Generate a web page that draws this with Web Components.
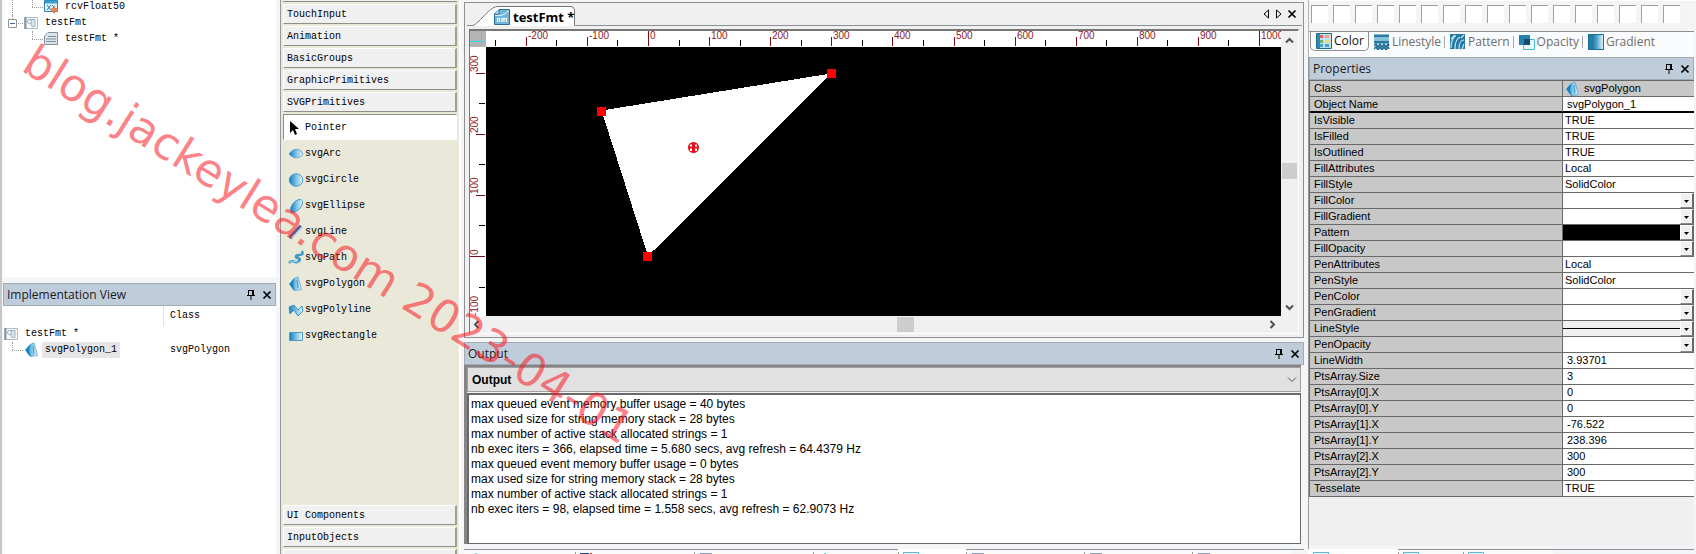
<!DOCTYPE html>
<html lang="en">
<head>
<meta charset="utf-8">
<title>testFmt</title>
<style>
  html, body { margin: 0; height: 100%; }
  body { background: #f4f5f6; overflow: hidden; color: #000;
    --mono: "Liberation Mono", monospace; --ui: "Open Sans", "Noto Sans", sans-serif; --arial: "Liberation Sans", Arial, sans-serif;
    --title: #bfcddb; --line: #8c8f93; }
</style>
</head>
<body>
<studio-app></studio-app>
<script>
const define = (name, html, setup) => customElements.define(name, class extends HTMLElement {
  constructor() {
    super();
    const t = document.createElement('template');
    t.innerHTML = typeof html === 'string' ? html : html(this);
    this.attachShadow({ mode: 'open' }).appendChild(t.content.cloneNode(true));
  }
  connectedCallback() { if (setup && !this.ready) { this.ready = true; setup(this, this.shadowRoot); } }
});

/* ---------- icons ---------- */
const blue = '<defs><linearGradient id="g"><stop offset="0" stop-color="#0e7dbb"/><stop offset=".5" stop-color="#7cc0e4"/><stop offset="1" stop-color="#e6f5fc"/></linearGradient></defs>';
const ICONS = {
  pin: [10, 12, '<path d="M2.5 1v5M6.5 1v5M7.5 1v5M2 1.500h6M1 6.500h8M5 7v4" stroke="#000" fill="none"/>'],
  close: [10, 10, '<path d="M1.500 1.500l7 7M8.500 1.500l-7 7" stroke="#000" stroke-width="1.700" fill="none"/>'],
  left: [7, 10, '<path d="M5.500 1v8L1 5z" stroke="#000" fill="none"/>'],
  right: [7, 10, '<path d="M1.500 1v8L6 5z" stroke="#000" fill="none"/>'],
  up: [9, 7, '<path d="M1 5.500L4.500 2 8 5.500" stroke="#505050" stroke-width="2" fill="none"/>'],
  down: [9, 7, '<path d="M1 1.500L4.500 5 8 1.500" stroke="#505050" stroke-width="2" fill="none"/>'],
  prev: [7, 9, '<path d="M5.500 1L2 4.500 5.500 8" stroke="#505050" stroke-width="2" fill="none"/>'],
  next: [7, 9, '<path d="M1.500 1L5 4.500 1.500 8" stroke="#505050" stroke-width="2" fill="none"/>'],
  thin: [10, 7, '<path d="M1 1.500L5 5.500 9 1.500" stroke="#505050" fill="none"/>'],
  tri: [5, 3, '<path d="M0 0h5L2.500 3z"/>'],
  arrow: [16, 16, '<path d="M2 1v12l3-3 2 5 2-1-2-5h4z"/>'],
  arc: [16, 16, blue + '<path d="M1 8C4 3 10 2 13 5l2 3c-3 5-10 5-14 0z" fill="url(#g)" stroke="#4aa0d0" stroke-width=".8"/>'],
  circle: [16, 16, blue + '<ellipse cx="8" cy="8" rx="6.800" ry="6.300" fill="url(#g)" stroke="#4f9fca"/>'],
  ellipse: [16, 16, blue + '<path d="M3 14C1 10 5 3 11 1.500c4-.5 4 3 3 5.500-2 5-8 9-11 7z" fill="url(#g)" stroke="#4f9fca"/>'],
  line: [16, 16, '<path d="M2 14L13 2" stroke="#3d5f96" stroke-width="3.500"/><path d="M4 14L14 3" stroke="#b9d3ea" stroke-width="1.500"/>'],
  path: [16, 16, '<path d="M1 13c4-4 5 0 8-1s4-3 1-4c-3 0-3-3 1-3s4-1 3-4" stroke="#3b9cc9" stroke-width="2.500" fill="none"/><path d="M2 13c4-3 6 0 8-2" stroke="#bfe4f3" fill="none"/>'],
  polygon: [16, 16, blue + '<path d="M6 2.500L10 1l3.500 12.500L6 14.500 1.500 8z" fill="url(#g)" stroke="#58a9d3" stroke-width=".8"/><path d="M6 2.500L1.500 8 6 14.500 5 8z" fill="#1284bd"/><path d="M9 4l1 8" stroke="#3c9ccc" fill="none"/>'],
  polyline: [16, 16, blue + '<path d="M1 5l5-2 4 5 4-4 1 5-5 5-4-6-4 4z" fill="url(#g)" stroke="#3b96c8"/>'],
  rect: [16, 16, blue + '<path d="M1.500 4.500h13v8h-13z" fill="url(#g)" stroke="#4c9dc9"/>'],
  node: [14, 14, '<path d="M.5 1.500h13v11H.5z" fill="#f6f8f9" stroke="#aebcc5"/><path d="M1.500 1v12" stroke="#8296a3" stroke-width="2"/><path d="M5 3.500h6v7H8z" fill="#d6e4ee" stroke="#9fb6c6"/><circle cx="5.500" cy="5.500" r="2" fill="#fff" stroke="#8fabbd"/>'],
  file: [14, 14, '<path d="M4 .5h9.500v12H.5V4z" fill="#dce5ea" stroke="#7e929e"/><path d="M4 4.500h8M2 7h10M2 9.500h10" stroke="#7e929e"/>'],
  recv: [14, 14, '<path d="M.5.5h13v11H.5z" fill="#e4f3fb" stroke="#2a7cab"/><path d="M1 2h12" stroke="#3b9fd2" stroke-width="3"/><path d="M3 5l4 5m0-5l-4 5m5-5l3 3" stroke="#2478a8"/><path d="M7 9.500l3.500-3v2H14v3h-3.500v2z" fill="#ef8a4a" stroke="#c5622a" stroke-width=".6"/>'],
  doc: [16, 16, '<path d="M5 .5h10.500v15H.5V5z" fill="#71b5da" stroke="#246e9b"/><path d="M1 6.500h5l4-1 5-4" stroke="#d9f1fb" fill="none"/><path d="M5 1v4H1" stroke="#246e9b" fill="#e7f6fd"/><path d="M3.500 13V9.500h2V13M8 13V9.500h2V13m0-3.500h2.500V13" stroke="#fff" fill="none" stroke-width="1.200"/>'],
  color: [16, 16, '<path d="M.5 .5h15v15H.5z" fill="#bde2f0" stroke="#1b6d94"/><path d="M1 1h3v14H1z" fill="#3089b5"/><path d="M4 2h3v3H4z" fill="#ef5a4f"/><path d="M4 7h3v3H4z" fill="#6abb5a"/><path d="M4 11h3v3H4zM9 11h4v3H9z" fill="#4aa3cf"/><path d="M9 2h4v3H9z" fill="#f3a27c"/><path d="M9 7h4v3H9z" fill="#f2dc7c"/>'],
  lines: [16, 16, '<path d="M0 2h15M0 8h15" stroke="#247ba6" stroke-width="3"/><path d="M0 5h15" stroke="#5db0d5" stroke-width="1.500"/><path d="M0 12l2-2 2 3 2-3 2 3 2-3 2 3 2-3 1 2M0 15l2-2 2 3 2-3 2 3 2-3 2 3 2-3 1 2" stroke="#1c6b93" stroke-width="1.500" fill="none"/>'],
  pattern: [16, 16, '<path d="M0 0h15v15H0z" fill="#2478a2"/><path d="M1 14c0-8 3-12 5-12M5 15c0-8 3-11 5-12M9 15c0-7 3-9 5-9M1 5l4-4M11 4l3-3M12 15l2-5" stroke="#c3e6f4" stroke-width="1.200" fill="none"/>'],
  opacity: [16, 16, '<path d="M4.500 5.500h11v10h-11z" fill="#e8f8fc" stroke="#4db8d2"/><path d="M0 1h11v10H0z" fill="#2480ad"/><path d="M5 5h6v6H5z" fill="#124d6d"/>'],
  gradient: [16, 16, '<defs><linearGradient id="h"><stop offset="0" stop-color="#0d5273"/><stop offset=".5" stop-color="#3f9cc8"/><stop offset="1" stop-color="#e8f6fb"/></linearGradient></defs><path d="M.5 .5h15v15H.5z" fill="url(#h)" stroke="#1b6c93"/><path d="M1 1h3v14H1z" fill="#1f7fae"/>'],
  pane: [16, 16, '<path d="M.5 .5h15v15H.5z" fill="#e6f6fb" stroke="#5fb8d8"/><path d="M1 2h4v13H1z" fill="#3fa6cf"/><path d="M6 2v3M10 2l2 3M13 2v3" stroke="#2a86ad"/>'],
  globe: [14, 14, '<circle cx="7" cy="7" r="6" fill="#bfe6f2" stroke="#3fa5c4"/>'],
  calls: [14, 14, '<path d="M0 0h9v10H0z" fill="#2f3f8f"/><path d="M11 0v6" stroke="#c8502a" stroke-width="2"/>'],
  sheet: [14, 14, '<path d="M1 1h12v12H1z" fill="#7d9bd0" stroke="#303c6c"/>'],
  search: [14, 14, '<path d="M7 0l5 4v8H2V4z" fill="#2fa3ac"/>']
};
customElements.define('ui-icon', class extends HTMLElement {
  connectedCallback() {
    if (this.shadowRoot) return;
    const [w, h, body] = ICONS[this.getAttribute('name')];
    this.attachShadow({ mode: 'open' }).innerHTML =
      `<style>:host{display:block;flex:none;line-height:0}svg{display:block}</style><svg width="${w}" height="${h}" viewBox="0 0 ${w} ${h}" aria-hidden="true">${body}</svg>`;
  }
});

/* ---------- title bar of a docked panel ---------- */
define('panel-title', `<style>
  :host{display:flex;align-items:center;box-sizing:border-box;height:23px;padding:0 2px 0 3px;background:var(--title);border:1px solid #a3abb2;font:12px/20px var(--ui);color:#1b1b1b}
  span{flex:1}
  button{border:0;background:none;padding:0;margin-left:4px;width:12px;height:16px;display:grid;place-items:center}
</style><span><slot></slot></span><button aria-label="Pin"><ui-icon name="pin"></ui-icon></button><button aria-label="Close"><ui-icon name="close"></ui-icon></button>`);

/* ---------- one row of a tree ---------- */
define('tree-row', el => `<style>
  :host{display:flex;align-items:center;height:16px;font:10px/16px var(--mono);white-space:pre}
  .guide{align-self:stretch;display:flex;flex:none}
  .l{width:20px;box-sizing:border-box;position:relative}
  .l.v::before,.l.e::before{content:"";position:absolute;left:8px;top:0;bottom:0;border-left:1px dotted #999}
  .l.e::before{bottom:8px}
  .l.e::after,.l.b::after{content:"";position:absolute;left:8px;right:1px;top:8px;border-top:1px dotted #999}
  .l.b::after{left:14px}
  .l.b::before{content:"";position:absolute;left:8px;top:0;height:4px;border-left:1px dotted #999}
  button{position:absolute;left:4px;top:4px;width:9px;height:9px;padding:0;border:1px solid #919191;border-radius:1px;background:linear-gradient(#4b63a7,#4b63a7) center/5px 1px no-repeat #fff}
  ui-icon{width:14px}
  .t{margin-left:4px;padding:0 3px}
  :host([selected]) .t{background:#e6e6e6}
</style><div class="guide">${(el.getAttribute('guide') || '').split('').map(c => `<div class="l ${c}">${c === 'b' ? '<button aria-label="Collapse"></button>' : ''}</div>`).join('')}</div><ui-icon name="${el.getAttribute('icon')}"></ui-icon><span class="t"><slot></slot></span>`);

define('project-tree', `<style>
  :host{display:block;background:#fff;padding:0 0 0 1px;overflow:hidden}
  div{margin-top:-1px}
</style><div>
<tree-row guide="ve" icon="recv">rcvFloat50</tree-row>
<tree-row guide="b" icon="node">testFmt</tree-row>
<tree-row guide="ne" icon="file">testFmt *</tree-row></div>`);

define('implementation-view', `<style>
  :host{display:flex;flex-direction:column}
  .body{flex:1;background:#fff;font:10px/16px var(--mono)}
  .head,.row{display:grid;grid-template-columns:160px 1fr}
  .head{height:20px}
  .head span:last-child{border-left:1px solid #e3e3e3;padding:2px 0 0 6px}
  .cell{padding-left:7px}
  tree-row{padding-left:1px}
</style><panel-title>Implementation View</panel-title>
<div class="body"><div class="head"><span></span><span>Class</span></div>
<div class="row"><tree-row icon="node">testFmt *</tree-row><span></span></div>
<div class="row"><tree-row guide="e" icon="polygon" selected>svgPolygon_1</tree-row><span class="cell">svgPolygon</span></div></div>`);

/* ---------- toolbox ---------- */
define('tool-group', `<style>
  :host{display:block}
  button{display:block;box-sizing:border-box;width:100%;height:20px;margin-bottom:2px;padding:1px 0 0 3px;text-align:left;background:#f0f0f0;border:1px solid #fff;border-right:2px solid #a0a093;border-bottom:1px solid #8f8f85;font:10px/17px var(--mono);color:#000}
</style><button><slot></slot></button>`);
define('tool-item', el => `<style>
  :host{display:block}
  button{display:flex;align-items:center;gap:1px;box-sizing:border-box;width:100%;height:26px;padding:1px 0 0 4px;border:1px solid transparent;background:none;font:10px/16px var(--mono);color:#000}
  :host([selected]) button{background:#fff;border-color:#8f8f85 #fff #fff #8f8f85}
</style><button><ui-icon name="${el.getAttribute('icon')}"></ui-icon><slot></slot></button>`);
define('tool-box', `<style>
  :host{display:flex;flex-direction:column;background:#eae9d9;border-left:1px solid #999;border-right:2px solid #fff;padding:0 2px 0 2px;overflow:hidden;min-height:0}
  .sliver{height:2px;margin-bottom:2px;background:#f0f0f0;box-sizing:border-box;border-bottom:1px solid #8f8f85;flex:none}
  .items{flex:1;min-height:0}
  .last{height:5px;overflow:hidden;flex:none}
</style><div class="sliver"></div>
<tool-group>TouchInput</tool-group><tool-group>Animation</tool-group><tool-group>BasicGroups</tool-group><tool-group>GraphicPrimitives</tool-group><tool-group>SVGPrimitives</tool-group>
<div class="items">
<tool-item icon="arrow" selected>Pointer</tool-item><tool-item icon="arc">svgArc</tool-item><tool-item icon="circle">svgCircle</tool-item><tool-item icon="ellipse">svgEllipse</tool-item><tool-item icon="line">svgLine</tool-item><tool-item icon="path">svgPath</tool-item><tool-item icon="polygon">svgPolygon</tool-item><tool-item icon="polyline">svgPolyline</tool-item><tool-item icon="rect">svgRectangle</tool-item></div>
<tool-group>UI Components</tool-group><tool-group>InputObjects</tool-group><div class="last"><tool-group></tool-group></div>`);

/* ---------- drawing editor with rulers ---------- */
const STEP = 61.1, ZERO_X = 162, ZERO_Y = 209;
const hRuler = width => {
  let s = '';
  for (let i = -5; ZERO_X + i * STEP / 2 < width; i++) {
    const x = Math.round(ZERO_X + i * STEP / 2), v = i * 50;
    if (i % 2) s += `<path d="M${x}.5 9v6" stroke="#000"/>`;
    else s += `<path d="M${x}.5 ${v % 1000 ? 6 : 0}V15" stroke="#7d0a18"/><text x="${x + 2}" y="8">${v}</text>`;
  }
  return s;
};
const vRuler = height => {
  let s = '';
  for (let i = 6; ZERO_Y - i * STEP / 2 < height + 20; i--) {
    const y = Math.round(ZERO_Y - i * STEP / 2), v = i * 50;
    if (i % 2) s += `<path d="M9 ${y}.5h6" stroke="#000"/>`;
    else s += `<path d="M${v ? 6 : 0} ${y}.5H15" stroke="#7d0a18"/><text transform="translate(8 ${y - 1}) rotate(-90)">${v}</text>`;
  }
  return s;
};
define('drawing-editor', `<style>
  :host{display:flex;flex-direction:column;box-sizing:border-box;border:1px solid var(--line);background:#f0f0f0;padding:0 4px 3px 4px;min-height:0}
  .tabs{display:flex;height:22px;align-items:center;margin-left:-2px;margin-right:-3px;border-bottom:1px solid var(--line);position:relative;gap:5px;padding:0 5px 0 0}
  .tab{align-self:flex-end;display:flex;align-items:center;gap:3px;height:19px;width:103px;border:0;padding:0 0 0 21px;margin-left:6px;background:none;position:relative;z-index:0;margin-bottom:-1px;font:bold 13px/18px var(--ui);color:#000}
  .tab>svg{position:absolute;left:0;bottom:0;z-index:-1}
  .tab span{white-space:pre}
  .sp{flex:1}
  .nav{border:0;background:none;padding:0;display:block}
  .frame{flex:1;display:grid;grid-template:16px 1fr 17px/16px 1fr 17px;margin-top:3px;border:1px solid #777;border-top:2px solid #777;border-right:1px solid #fff;border-bottom:1px solid #fff;min-height:0}
  svg{display:block}
  .fill{width:100%;height:100%;min-width:0;min-height:0;overflow:hidden;background:#fff}
  .fill text{font:10px var(--arial);fill:#8c1c2a}
  .black{background:#000}
  .clip{overflow:hidden;display:grid;min-width:0;min-height:0;contain:size}
  .vbar{grid-row:1/3;grid-column:3;display:flex;flex-direction:column;align-items:center;padding:6px 0 5px;box-sizing:border-box}
  .vbar i{width:15px;height:16px;background:#cdcdcd;margin:119px 0 auto}
  .hbar{grid-column:1/3;display:flex;align-items:center;padding:0 5px 0 3px}
  .hbar i{width:17px;height:15px;background:#cdcdcd;margin:0 auto 0 calc(52% - 1px)}
</style>
<div class="tabs"><button class="tab"><svg width="103" height="20" viewBox="0 0 103 20"><path d="M0 19.500C6 17 14 5 20 2Q22 .5 25 .5H98Q101 .5 101.500 4V19.500V20H0z" fill="#fff"/><path d="M0 19.500C6 17 14 5 20 2Q22 .5 25 .5H98Q101 .5 101.500 4V19.500" fill="none" stroke="#777"/></svg><ui-icon name="doc"></ui-icon><span>testFmt *</span></button><div class="sp"></div><button class="nav" aria-label="Previous"><ui-icon name="left"></ui-icon></button><button class="nav" aria-label="Next"><ui-icon name="right"></ui-icon></button><button class="nav" aria-label="Close"><ui-icon name="close"></ui-icon></button></div>
<div class="frame">
  <svg width="16" height="16"><path d="M0 0h16v16H0z" fill="#b4b4b4"/><path d="M11.500 0v15M0 10.500h14" stroke="#22e3e3"/></svg>
  <div class="clip"><svg class="fill h"></svg></div>
  <div class="clip"><svg class="fill v"></svg></div>
  <div class="clip"><svg class="fill black" shape-rendering="crispEdges"><path d="M115.500 63.500L345 26.500 162 209z" fill="#fff"/><path d="M111 60h9v9h-9zM341 22h9v9h-9zM157 205h9v9h-9z" fill="#f00"/><g shape-rendering="auto"><circle cx="207.500" cy="100.500" r="5.500" fill="#e8101c"/><path d="M205 97.500v2M210 97.500v2M205 101.500v2.500M210 101.500v2.500" stroke="#fff" stroke-width="2"/></g></svg></div>
  <div class="vbar"><ui-icon name="up"></ui-icon><i></i><ui-icon name="down"></ui-icon></div>
  <div class="hbar"><ui-icon name="prev"></ui-icon><i></i><ui-icon name="next"></ui-icon></div>
</div>`, (el, root) => {
  const h = root.querySelector('.h'), v = root.querySelector('.v');
  new ResizeObserver(() => {
    h.innerHTML = hRuler(h.parentNode.clientWidth);
    v.innerHTML = vRuler(v.parentNode.clientHeight);
  }).observe(el);
});

/* ---------- output ---------- */
define('output-panel', `<style>
  :host{display:flex;flex-direction:column}
  .box{border:solid #858585;border-width:2px 0 0 3px;margin-right:3px}
  .pick{display:flex;align-items:center;box-sizing:border-box;height:25px;background:#e1e1e1;border:1px solid #a0a0a0;padding-right:3px;margin-bottom:1px}
  select{flex:1;appearance:none;border:0;background:none;padding:0 0 0 4px;font:bold 12px/20px var(--arial);color:#000}
  .pick ui-icon{pointer-events:none}
  .log{box-sizing:border-box;height:151px;background:#fff;border:1px solid #666;border-width:2px 1px 1px 2px;border-color:#696969;padding:2px 0 0 2px;font:12px/15px var(--arial)}
</style><panel-title>Output</panel-title>
<div class="box"><div class="pick"><select aria-label="Output source"><option>Output</option></select><ui-icon name="thin"></ui-icon></div>
<div class="log" role="log"></div></div>`, (el, root) => {
  root.querySelector('.log').innerHTML = ['max queued event memory buffer usage = 40 bytes', 'max used size for string memory stack = 28 bytes', 'max number of active stack allocated strings = 1', 'nb exec iters = 366, elapsed time = 5.680 secs, avg refresh = 64.4379 Hz', 'max queued event memory buffer usage = 0 bytes', 'max used size for string memory stack = 28 bytes', 'max number of active stack allocated strings = 1', 'nb exec iters = 98, elapsed time = 1.558 secs, avg refresh = 62.9073 Hz'].map(t => `<div>${t}</div>`).join('');
});

/* ---------- row of tabs below a panel: "icon:width", * marks the open one ---------- */
define('dock-tabs', el => `<style>
  :host{display:flex;height:5px;overflow:hidden;flex:none}
  button{box-sizing:border-box;height:20px;padding:1px 0 0 5px;border:0;border-top:1px solid var(--line);background:#fafafa;text-align:left;flex:none;position:relative}
  button+button::before{content:"";position:absolute;left:0;top:2px;bottom:0;border-left:1px solid #999}
  .on{background:#fff;border-color:#fff}
  .rest{flex:1;border-top:1px solid var(--line)}
</style>${el.getAttribute('tabs').split(' ').map(t => { const [n, w] = t.replace('*', '').split(':'); return `<button class="${t[0] === '*' ? 'on' : ''}" style="width:${w}px" aria-label="${n}"><ui-icon name="${n}"></ui-icon></button>`; }).join('')}<div class="rest"></div>`);

/* ---------- attribute palettes ---------- */
define('palette-panel', `<style>
  :host{display:block;border-left:1px solid #b5b5b5}
  .swatches{display:flex;gap:5px;height:28px;padding:0 0 0 2px;box-sizing:border-box;background:#f4f4f4;border-top:1px solid #fff;overflow:hidden}
  .swatches button{width:17px;height:18px;margin-top:4px;padding:0;flex:none;border:solid #a0a0a0;border-width:1px 0 0 1px;background:#fff}
  .tabs{display:flex;align-items:center;height:25px;margin-top:3px;border-top:1px solid var(--line);background:#fafbfc;padding-left:1px}
</style><div class="swatches">${'<button aria-label="Colour"></button>'.repeat(17)}</div>
<div class="tabs"><palette-tab icon="color" selected>Color</palette-tab><palette-tab icon="lines">Linestyle</palette-tab><palette-tab icon="pattern">Pattern</palette-tab><palette-tab icon="opacity">Opacity</palette-tab><palette-tab icon="gradient" last>Gradient</palette-tab></div>`);
define('palette-tab', el => `<style>
  :host{display:block;align-self:flex-start}
  button{display:flex;align-items:center;gap:2px;height:19px;padding:0 4px 0 5px;border:0;background:none;font:12px/18px var(--ui);color:#6d6d6d;position:relative}
  button::after{content:"";position:absolute;right:0;top:4px;bottom:3px;border-right:1px solid #aaa}
  :host([last]) button::after,:host([selected]) button::after{display:none}
  :host([selected]) button{color:#111;background:#fff;border:1px solid var(--line);border-top:0;border-radius:0 0 5px 5px}
</style><button><ui-icon name="${el.getAttribute('icon')}"></ui-icon><span><slot></slot></span></button>`);

/* ---------- property grid ---------- */
const PROPS = [['Class', 'svgPolygon', 'class'], ['Object Name', 'svgPolygon_1', 'edit'], ['IsVisible', 'TRUE'], ['IsFilled', 'TRUE'], ['IsOutlined', 'TRUE'], ['FillAttributes', 'Local'], ['FillStyle', 'SolidColor'], ['FillColor', '', 'drop'], ['FillGradient', '', 'drop'], ['Pattern', '', 'drop solid'], ['FillOpacity', '', 'drop'], ['PenAttributes', 'Local'], ['PenStyle', 'SolidColor'], ['PenColor', '', 'drop'], ['PenGradient', '', 'drop'], ['LineStyle', '', 'drop stroke'], ['PenOpacity', '', 'drop'], ['LineWidth', '3.93701', 'edit'], ['PtsArray.Size', '3', 'edit'], ['PtsArray[0].X', '0', 'edit'], ['PtsArray[0].Y', '0', 'edit'], ['PtsArray[1].X', '-76.522', 'edit'], ['PtsArray[1].Y', '238.396', 'edit'], ['PtsArray[2].X', '300', 'edit'], ['PtsArray[2].Y', '300', 'edit'], ['Tesselate', 'TRUE']];
const cell = (v, k = '', i) => k === 'edit' ? `<input id="p${i}" value="${v}">`
  : k === 'class' ? `<div class="cls"><ui-icon name="polygon"></ui-icon>${v}</div>`
  : k.startsWith('drop') ? `<div class="${k}"><select id="p${i}"><option></option></select><span><ui-icon name="tri"></ui-icon></span></div>` : v;
define('property-grid', `<style>
  :host{display:flex;flex-direction:column;border-left:1px solid #999}
  table{border-collapse:separate;border-spacing:0;table-layout:fixed;width:100%;border-left:1px solid #696969;border-top:1px solid #696969;font:11px/15px var(--arial)}
  th,td{box-sizing:border-box;height:16px;padding:0;border-bottom:1px solid #696969;font-weight:400;text-align:left;overflow:hidden;white-space:nowrap}
  th{background:#c8c8c8;border-right:1px solid #696969;padding-left:4px}
  td{background:#fff;width:131px;padding-left:2px}
  tr:nth-child(1) td{background:#c8c8c8}
  tr:nth-child(2) th,tr:nth-child(2) td{border-bottom:2px solid #000;line-height:14px}
  tr:nth-child(2) input{height:14px}
  input{display:block;box-sizing:border-box;width:100%;height:15px;border:0;padding:0 0 0 2px;background:none;font:11px/15px var(--arial);color:#000}
  .cls{display:flex;align-items:center;gap:3px;height:15px}
  .drop{display:flex;height:15px;margin-left:-2px}
  .drop select{flex:1;appearance:none;border:0;padding:0;background:#fff;min-width:0;border-radius:0}
  .drop span{width:14px;box-sizing:border-box;display:grid;place-items:center;padding-top:2px;background:#f0f0f0;border:1px solid;border-color:#fff #696969 #8a8a8a #fff;border-right-width:2px;pointer-events:none}
  .drop.solid select{background:#000}
  .drop.stroke select{background:linear-gradient(#000,#000) center/100% 1px no-repeat #f0f0f0}
  .rest{flex:1;background:#f0f0f0;margin-bottom:3px}
</style><panel-title>Properties</panel-title>
<table><tbody>${PROPS.map(([n, v, k], i) => `<tr><th scope="row">${k && k !== 'class' ? `<label for="p${i}">${n}</label>` : n}</th><td>${cell(v, k, i)}</td></tr>`).join('')}</tbody></table><div class="rest"></div>`);

define('water-mark', `<style>
  :host{position:absolute;left:14px;top:27px;transform-origin:0 100%;transform:rotate(32deg);font:45px/52px "DejaVu Sans",sans-serif;color:rgba(250,20,30,.55);white-space:pre;pointer-events:none}
</style><slot></slot>`);

define('studio-app', `<style>
  :host{display:grid;grid-template-columns:280px 181px minmax(0,1fr) 388px;height:100vh;position:relative;overflow:hidden}
  .left{display:grid;grid-template-rows:277px 1fr;gap:6px;border-left:2px solid #c8c8c8;margin-right:4px;padding-left:1px}
  .mid{display:flex;flex-direction:column;padding:2px 4px 0 3px;min-height:0}
  drawing-editor{flex:1;margin-bottom:4px}
  output-panel{margin-bottom:5px}
  .right{display:flex;flex-direction:column;padding-right:2px;min-height:0}
  property-grid{flex:1;min-height:0}
</style>
<div class="left"><project-tree></project-tree><implementation-view></implementation-view></div>
<tool-box></tool-box>
<div class="mid"><drawing-editor></drawing-editor><output-panel></output-panel><dock-tabs tabs="globe:111 calls:119 sheet:119 search:85 *pane:68 sheet:118 sheet:108 sheet:100"></dock-tabs></div>
<div class="right"><palette-panel></palette-panel><property-grid></property-grid><dock-tabs tabs="*pane:90 pane:65 pane:90"></dock-tabs></div>
<water-mark>blog.jackeylea.com 2023-04-01</water-mark>`);
</script>
</body>
</html>
